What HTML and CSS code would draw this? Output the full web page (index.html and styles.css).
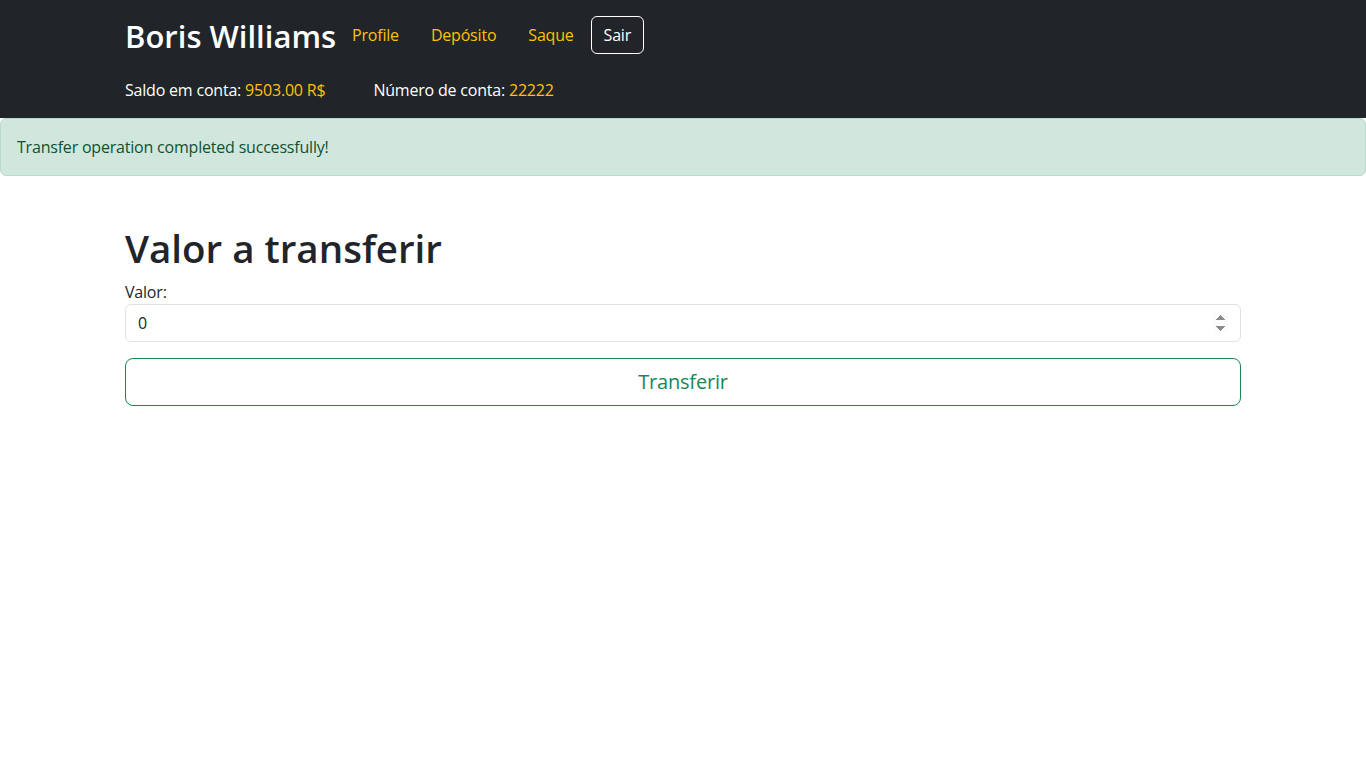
FILE: index.html
```html
<!DOCTYPE html>
<html lang="pt">
<head>
<meta charset="utf-8">
<title>Transferir</title>
<link rel="stylesheet" href="styles.css">
</head>
<body>
<nav class="navbar">
  <div class="container">
    <div class="nav-top">
      <a class="brand" href="#">Boris Williams</a>
      <ul class="nav-links">
        <li><a href="#">Profile</a></li>
        <li><a href="#">Depósito</a></li>
        <li><a href="#">Saque</a></li>
      </ul>
      <button class="btn-sair" type="button">Sair</button>
    </div>
    <div class="nav-info">
      <span class="info">Saldo em conta: <span class="hl">9503.00 R$</span></span>
      <span class="info">Número de conta: <span class="hl">22222</span></span>
    </div>
  </div>
</nav>
<div class="alert">Transfer operation completed successfully!</div>
<main class="container main">
  <h1 class="title">Valor a transferir</h1>
  <form class="form">
    <label class="label" for="valor">Valor:</label>
    <input class="input" id="valor" type="number" value="0">
    <button class="btn-transfer" type="button">Transferir</button>
  </form>
</main>
</body>
</html>
```
FILE: styles.css
```css
* { box-sizing: border-box; }
body {
  margin: 0;
  font-family: "Open Sans", "Noto Sans", sans-serif;
  font-size: 16px;
  line-height: 1.5;
  letter-spacing: -0.2px;
  color: #212529;
  background: #fff;
}
.container {
  width: 1140px;
  margin: 0 auto;
  padding: 0 12px;
}
.navbar {
  background: #212529;
  height: 118px;
  padding-top: 16px;
}
.nav-top {
  display: flex;
  align-items: center;
  height: 38px;
}
.brand {
  color: #fff;
  text-decoration: none;
  font-size: 31px;
  font-weight: 600;
  letter-spacing: 0;
  line-height: 1;
  margin-top: 2px;
}
.nav-links {
  display: flex;
  list-style: none;
  margin: 0;
  padding: 0;
}
.nav-links a {
  display: block;
  padding: 0 16px;
  color: #ffc107;
  text-decoration: none;
}
.btn-sair {
  font: inherit;
  letter-spacing: inherit;
  color: #fff;
  background: transparent;
  border: 1px solid #fff;
  border-radius: 6px;
  height: 38px;
  padding: 0 12px;
  margin-left: 1px;
}
.nav-info {
  display: flex;
  gap: 48px;
  margin-top: 24px;
  color: #fff;
}
.hl { color: #ffc107; }
.alert {
  background: #d1e7dd;
  border: 1px solid #badbcc;
  color: #0f5132;
  border-radius: 6px;
  padding: 16px;
}
.main { padding-top: 48px; }
.title {
  margin: 0 0 8px;
  font-size: 38.5px;
  font-weight: 600;
  letter-spacing: 0;
  line-height: 48px;
}
.form { display: flex; flex-direction: column; }
.label { display: block; }
.input {
  font: inherit;
  letter-spacing: inherit;
  color: #212529;
  height: 38px;
  padding: 6px 12px;
  border: 1px solid #dee2e6;
  border-radius: 6px;
  width: 100%;
}
.input::-webkit-inner-spin-button { opacity: 1; }
.btn-transfer {
  margin-top: 16px;
  font: inherit;
  font-size: 20px;
  letter-spacing: inherit;
  color: #198754;
  background: #fff;
  border: 1px solid #198754;
  border-radius: 8px;
  height: 48px;
  width: 100%;
}
```
